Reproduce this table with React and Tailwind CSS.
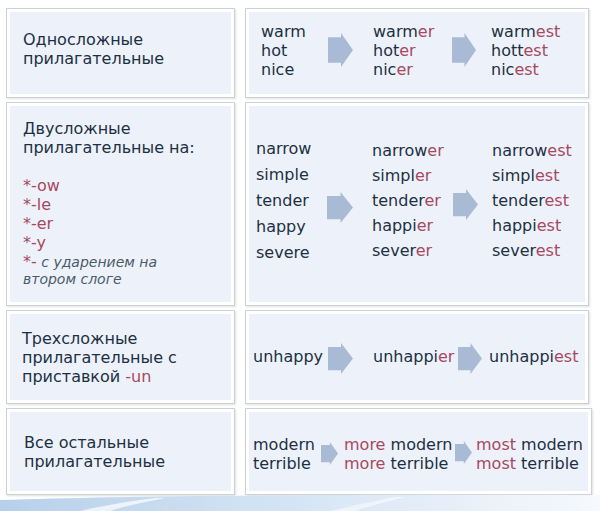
const RED = 'text-[#a8485f]';

const Arrow = ({ w = 25, h = 32, className = '' }) => (
  <svg width={w} height={h} viewBox="0 0 25 32" preserveAspectRatio="none" className={className}>
    <polygon points="0,4 13,4 13,0 25,16 13,32 13,28 0,28" fill="#a9bbd4" />
  </svg>
);

const Card = ({ className = '', innerClassName = '', children }) => (
  <div className={`border border-[#cdd1d6] bg-white p-[3px] shadow-[1px_1px_2px_rgba(0,0,0,0.12)] ${className}`}>
    <div className={`h-full bg-[#edf2fa] ${innerClassName}`}>{children}</div>
  </div>
);

const Word = ({ base, end, pre }) => (
  <div className="whitespace-nowrap">
    {pre && <span className={RED}>{pre} </span>}
    {base}
    {end && <span className={RED}>{end}</span>}
  </div>
);

export default function App() {
  return (
    <div
      className="relative h-[511px] w-[600px] overflow-hidden bg-white text-[16px] text-[#1d3043]"
      style={{ fontFamily: '"DejaVu Sans", Verdana, sans-serif' }}
    >
      <div className="flex flex-col gap-[4px] pl-[6px] pt-[8px]">
        {/* row 1 */}
        <div className="flex h-[90px] gap-[10px]">
          <Card className="w-[229px]" innerClassName="flex items-center pl-[13px] pb-[8px] leading-[19px]">
            <div>
              Односложные
              <br />
              прилагательные
            </div>
          </Card>
          <Card className="w-[344px]" innerClassName="flex items-center pl-[12px] pb-[6px] leading-[19px]">
            <div className="w-[67px]">
              <div>warm</div>
              <div>hot</div>
              <div>nice</div>
            </div>
            <Arrow w={25} h={34} />
            <div className="ml-[20px] w-[79px]">
              <Word base="warm" end="er" />
              <Word base="hot" end="er" />
              <Word base="nic" end="er" />
            </div>
            <Arrow w={24} h={34} />
            <div className="ml-[15px]">
              <Word base="warm" end="est" />
              <Word base="hott" end="est" />
              <Word base="nic" end="est" />
            </div>
          </Card>
        </div>

        {/* row 2 */}
        <div className="flex h-[204px] gap-[10px]">
          <Card className="w-[229px]" innerClassName="pl-[13px] pt-[13px] leading-[19px]">
            <div>Двусложные</div>
            <div>прилагательные на:</div>
            <div className={`mt-[19px] ${RED}`}>
              <div>*-ow</div>
              <div>*-le</div>
              <div>*-er</div>
              <div>*-y</div>
            </div>
            <div className="mt-[1px] text-[14px] leading-[17px] text-[#4b5a69]">
              <span className={`not-italic text-[16px] ${RED}`}>*-</span>{' '}
              <span className="italic">с ударением на</span>
              <br />
              <span className="italic">втором слоге</span>
            </div>
          </Card>
          <Card className="w-[344px]" innerClassName="flex items-center pl-[7px] pb-[6px]">
            <div className="w-[71px] leading-[26px]">
              <div>narrow</div>
              <div>simple</div>
              <div>tender</div>
              <div>happy</div>
              <div>severe</div>
            </div>
            <Arrow w={26} h={31} className="mt-[12px]" />
            <div className="ml-[19px] w-[81px] leading-[25px] -mt-[2px]">
              <Word base="narrow" end="er" />
              <Word base="simpl" end="er" />
              <Word base="tender" end="er" />
              <Word base="happi" end="er" />
              <Word base="sever" end="er" />
            </div>
            <Arrow w={25} h={31} className="mt-[6px]" />
            <div className="ml-[14px] leading-[25px] -mt-[2px]">
              <Word base="narrow" end="est" />
              <Word base="simpl" end="est" />
              <Word base="tender" end="est" />
              <Word base="happi" end="est" />
              <Word base="sever" end="est" />
            </div>
          </Card>
        </div>

        {/* row 3 */}
        <div className="flex h-[94px] gap-[10px]">
          <Card className="w-[229px]" innerClassName="flex items-center pl-[12px] leading-[19px]">
            <div>
              Трехсложные
              <br />
              прилагательные с
              <br />
              приставкой <span className={RED}>-un</span>
            </div>
          </Card>
          <Card className="w-[344px]" innerClassName="flex items-center pl-[4px]">
            <div className="w-[75px]">unhappy</div>
            <Arrow w={25} h={31} className="mt-[2px]" />
            <div className="ml-[20px] w-[85px]">
              <Word base="unhappi" end="er" />
            </div>
            <Arrow w={24} h={31} className="mt-[2px]" />
            <div className="ml-[7px]">
              <Word base="unhappi" end="est" />
            </div>
          </Card>
        </div>

        {/* row 4 */}
        <div className="flex h-[87px] gap-[10px]">
          <Card className="w-[229px]" innerClassName="flex items-center pl-[14px] leading-[19px]">
            <div>
              Все остальные
              <br />
              прилагательные
            </div>
          </Card>
          <Card className="w-[347px]" innerClassName="flex items-center pl-[4px] leading-[19px] pt-[4px]">
            <div className="w-[68px]">
              <div>modern</div>
              <div>terrible</div>
            </div>
            <Arrow w={17} h={23} />
            <div className="ml-[6px] w-[111px]">
              <Word pre="more" base="modern" />
              <Word pre="more" base="terrible" />
            </div>
            <Arrow w={17} h={23} className="-mt-[2px]" />
            <div className="ml-[4px]">
              <Word pre="most" base="modern" />
              <Word pre="most" base="terrible" />
            </div>
          </Card>
        </div>
      </div>

      {/* decorative swoosh at the bottom */}
      <svg className="absolute bottom-0 left-0" width="600" height="17" viewBox="0 0 600 17">
        <defs>
          <linearGradient id="sw" x1="0" y1="0" x2="1" y2="0">
            <stop offset="0" stopColor="#b7d0ea" />
            <stop offset="0.45" stopColor="#d3e3f3" />
            <stop offset="1" stopColor="#f6f9fd" />
          </linearGradient>
        </defs>
        <path d="M0,6 C120,2 300,0 600,1 L600,17 L0,17 Z" fill="url(#sw)" />
        <path d="M80,17 C110,10 140,6 155,4 L165,4 C150,7 125,12 110,17 Z" fill="#ffffff" opacity="0.7" />
        <path d="M330,17 C360,10 380,6 395,3 L405,3 C390,7 370,12 355,17 Z" fill="#ffffff" opacity="0.5" />
      </svg>
    </div>
  );
}
